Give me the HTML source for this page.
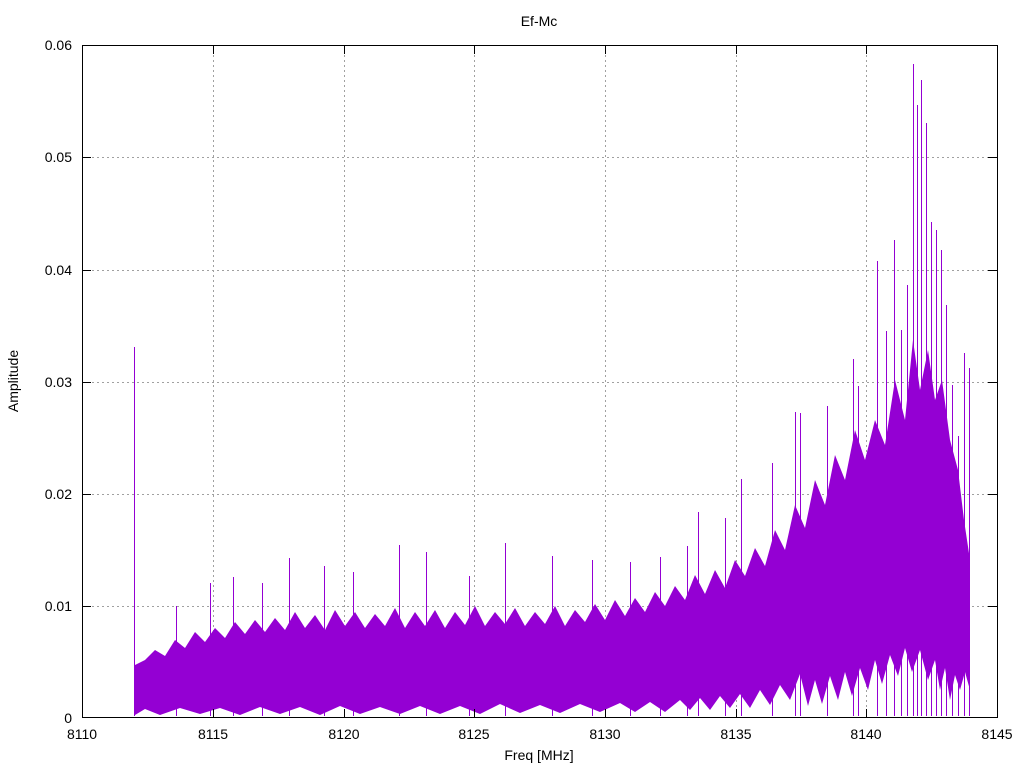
<!DOCTYPE html>
<html><head><meta charset="utf-8"><style>
html,body{margin:0;padding:0;background:#fff}
svg{display:block}
text{font-family:"Liberation Sans",sans-serif;font-size:14px;fill:#000}
</style></head><body>
<svg width="1024" height="768" viewBox="0 0 1024 768" xmlns="http://www.w3.org/2000/svg">
<rect width="1024" height="768" fill="#fff"/>
<g stroke="#a0a0a0" stroke-width="1" stroke-dasharray="2,3">
<path d="M213.5,45V718M344.5,45V718M474.5,45V718M605.5,45V718M736.5,45V718M866.5,45V718"/>
<path d="M82,606.5H997M82,494.5H997M82,382.5H997M82,270.5H997M82,157.5H997"/>
</g>
<g fill="#9400d3" stroke="none">
<polygon points="135,665 145,660 155,650 165,656 175,640 185,648 195,632 205,642 215,628 225,638 235,622 245,634 255,620 265,632 275,618 285,630 295,612 305,628 315,615 325,630 335,610 345,626 355,612 365,628 375,614 385,626 395,608 405,628 415,612 425,626 435,610 445,628 455,612 465,625 475,606 485,626 495,612 505,624 515,608 525,626 535,612 545,624 555,606 565,626 575,610 585,622 595,604 605,620 615,600 625,616 635,598 645,612 655,592 665,606 675,586 685,600 695,575 705,594 715,570 725,588 735,560 745,576 755,548 765,566 775,530 785,550 795,505 805,528 815,480 825,505 835,455 845,480 855,430 865,460 875,420 885,445 895,380 905,420 913,340 920,390 928,350 935,400 942,380 950,440 958,470 964,520 970,560 970,690 965,672 960,690 955,675 950,700 945,668 940,690 935,660 928,680 920,650 912,672 905,648 898,676 890,655 882,684 875,660 868,690 860,668 852,696 845,672 838,700 830,676 822,704 815,680 808,706 800,674 790,700 780,685 770,705 760,690 750,708 740,694 730,708 720,696 710,710 700,698 690,710 680,700 665,712 650,702 635,712 620,703 600,712 580,704 560,713 540,705 520,713 500,704 480,714 460,706 440,714 420,706 400,714 380,707 360,714 340,706 320,715 300,707 280,714 260,707 240,715 220,708 200,714 180,708 160,715 145,709 135,715"/>
</g>
<g stroke="#9400d3" stroke-width="1" fill="none">
<path d="M134.5,347V716M176.5,606V716M210.5,583V716M233.5,577V716M262.5,583V716M289.5,558V716M324.5,566V716M353.5,572V716M399.5,545V716M426.5,552V716M469.5,576V716M505.5,543V716M552.5,556V716M592.5,560V716M630.5,562V716M660.5,557V716M687.5,546V716M698.5,512V716M725.5,518V716M741.5,479V716M772.5,463V716M795.5,412V716M800.5,413V716M827.5,406V716M853.5,359V716M858.5,386V716M877.5,261V716M886.5,331V716M894.5,240V716M901.5,330V716M907.5,285V716M913.5,64V716M917.5,105V716M921.5,80V716M926.5,123V716M931.5,222V716M936.5,230V716M941.5,250V716M946.5,305V716M952.5,385V716M958.5,436V716M964.5,353V716M969.5,368V716"/>
</g>
<rect x="82.5" y="45.5" width="915" height="672" fill="none" stroke="#000" stroke-width="1"/>
<g stroke="#000" stroke-width="1">
<path d="M82,606.5h9M82,494.5h9M82,382.5h9M82,270.5h9M82,157.5h9M997,606.5h-9M997,494.5h-9M997,382.5h-9M997,270.5h-9M997,157.5h-9"/>
<path d="M213.5,718v-9M344.5,718v-9M474.5,718v-9M605.5,718v-9M736.5,718v-9M866.5,718v-9M213.5,45v9M344.5,45v9M474.5,45v9M605.5,45v9M736.5,45v9M866.5,45v9"/>
</g>
<g text-anchor="end">
<text x="72" y="723">0</text>
<text x="72" y="611">0.01</text>
<text x="72" y="499">0.02</text>
<text x="72" y="387">0.03</text>
<text x="72" y="275">0.04</text>
<text x="72" y="162">0.05</text>
<text x="72" y="50">0.06</text>
</g>
<g text-anchor="middle">
<text x="82" y="739">8110</text>
<text x="213" y="739">8115</text>
<text x="344" y="739">8120</text>
<text x="474" y="739">8125</text>
<text x="605" y="739">8130</text>
<text x="736" y="739">8135</text>
<text x="866" y="739">8140</text>
<text x="997" y="739">8145</text>
<text x="539" y="26">Ef-Mc</text>
<text x="539" y="760">Freq [MHz]</text>
<text x="0" y="0" transform="translate(18,381) rotate(-90)">Amplitude</text>
</g>
</svg>
</body></html>
